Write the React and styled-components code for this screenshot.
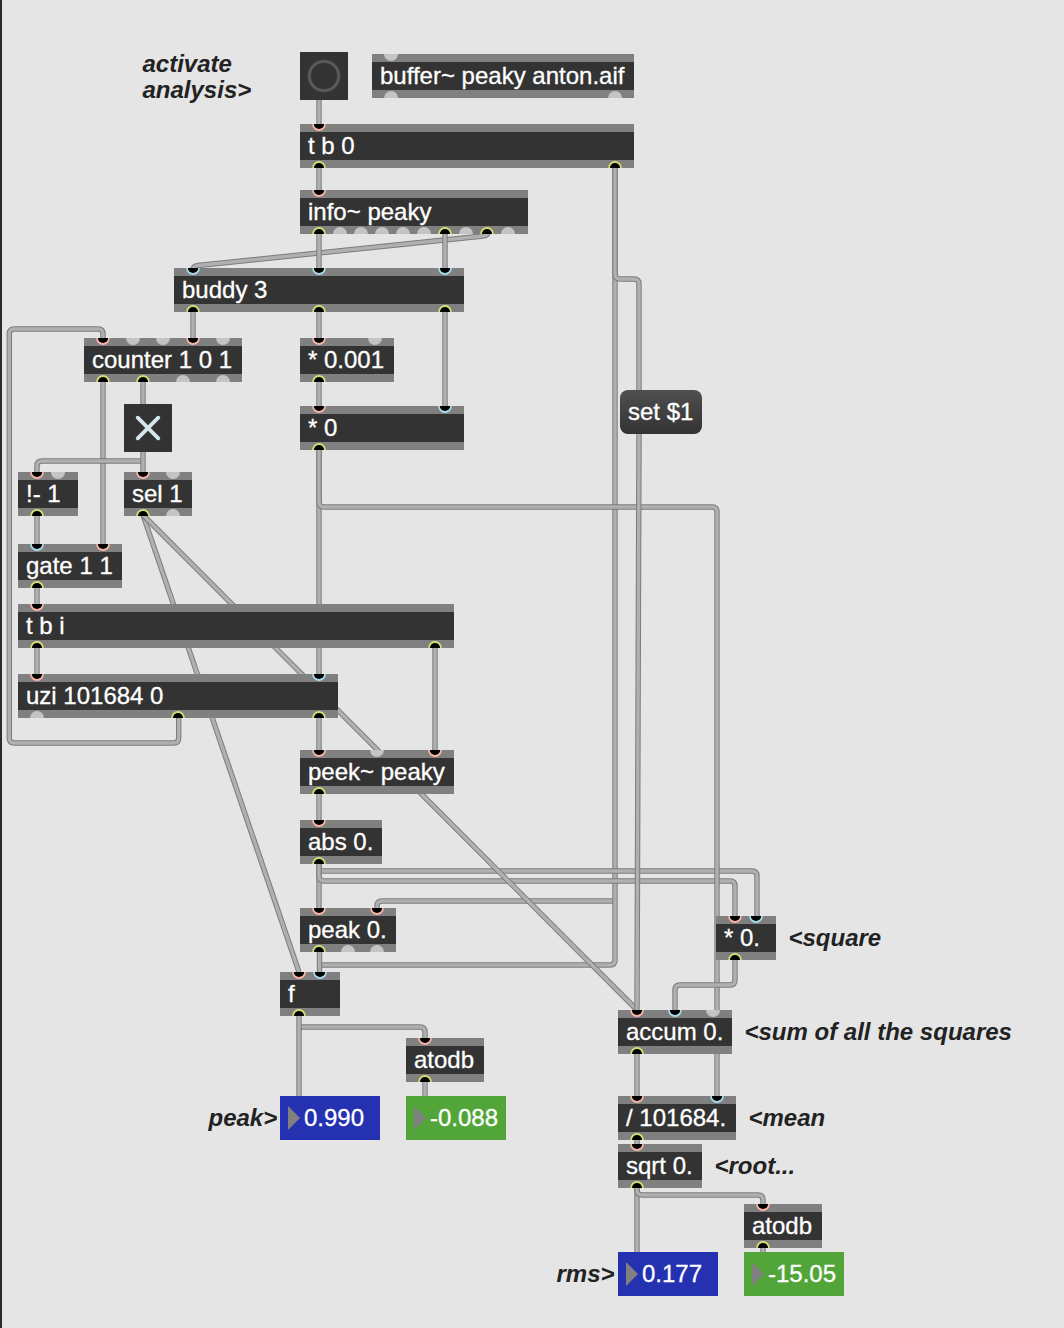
import React from 'react';
import styled, { createGlobalStyle } from 'styled-components';

const GlobalStyle = createGlobalStyle`
  body {
    margin: 0;
    background: #e5e5e5;
    overflow: hidden;
  }
`;

const Window = styled.div`
  display: flex;
  width: 1064px;
  height: 1328px;
`;

const WindowEdge = styled.div`
  flex: 0 0 2px;
  background: #2b2b2d;
`;

// the canvas keeps window coordinates, so it starts under the 2px edge
const Patcher = styled.main`
  position: relative;
  flex: 1;
  margin-left: -2px;
  overflow: hidden;
  font-family: 'Liberation Sans', Arial, sans-serif;
  font-size: 24px;
  line-height: 28px;
  color: #fff;
  white-space: pre;
  -webkit-text-stroke: 0.3px currentColor;
`;

const Cords = styled.svg`
  display: block;
  fill: none;
`;

const Item = styled.div`
  position: absolute;
  box-sizing: border-box;
  left: ${(props) => props.$x}px;
  top: ${(props) => props.$y}px;
`;

const ObjectBox = styled(Item)`
  display: flex;
  flex-direction: column;
  width: ${(props) => props.$w}px;
  height: 44px;
  background: #333;
`;

const Bar = styled.svg`
  display: block;
  width: 100%;
  height: 8px;
  background: #808080;
`;

const ObjectText = styled.div`
  height: 28px;
  padding-left: 8px;
`;

const Square = styled(Item)`
  display: flex;
  width: 48px;
  height: 48px;
  background: #333;
`;

const Message = styled(Item)`
  display: flex;
  width: 82px;
  height: 44px;
  padding: 8px;
  border-radius: 8px;
  background: linear-gradient(#4f4f4f, #333);
`;

const NumberBox = styled(Item)`
  display: flex;
  align-items: center;
  gap: 4px;
  width: 100px;
  height: 44px;
  padding-left: 8px;
  background: ${(props) => props.$color};
`;

const Comment = styled(Item)`
  color: #222;
  font-weight: bold;
  font-style: italic;
  line-height: 26px;
  -webkit-text-stroke: 0;
`;

const BLUE = '#2431b1';
const GREEN = '#52a639';

const RING = {
  hot: '#f5b5a5',
  cold: '#a5dbe8',
  out: '#d5dc72',
};

// ports are [kind, x inside the box], an empty kind is a port with no cord
const objects = [
  { text: 'buffer~ peaky anton.aif', x: 372, y: 54, w: 262, ins: [['', 19]], outs: [['', 19], ['', 243]] },
  { text: 't b 0', x: 300, y: 124, w: 334, ins: [['hot', 19]], outs: [['out', 19], ['out', 315]] },
  {
    text: 'info~ peaky', x: 300, y: 190, w: 228,
    ins: [['hot', 19]],
    outs: [['out', 19], ['', 40], ['', 61], ['', 82], ['', 103], ['', 124], ['out', 145], ['', 166], ['out', 187], ['', 208]],
  },
  {
    text: 'buddy 3', x: 174, y: 268, w: 290,
    ins: [['cold', 19], ['cold', 145], ['cold', 271]],
    outs: [['out', 19], ['out', 145], ['out', 271]],
  },
  {
    text: 'counter 1 0 1', x: 84, y: 338, w: 158,
    ins: [['hot', 19], ['', 49], ['', 79], ['hot', 109], ['', 139]],
    outs: [['out', 19], ['out', 59], ['', 99], ['', 139]],
  },
  { text: '* 0.001', x: 300, y: 338, w: 94, ins: [['hot', 19], ['', 75]], outs: [['out', 19]] },
  { text: '* 0', x: 300, y: 406, w: 164, ins: [['hot', 19], ['cold', 145]], outs: [['out', 19]] },
  { text: '!- 1', x: 18, y: 472, w: 60, ins: [['hot', 19], ['', 40]], outs: [['out', 19]] },
  { text: 'sel 1', x: 124, y: 472, w: 68, ins: [['hot', 19], ['', 49]], outs: [['out', 19], ['', 49]] },
  { text: 'gate 1 1', x: 18, y: 544, w: 104, ins: [['cold', 19], ['hot', 85]], outs: [['out', 19]] },
  { text: 't b i', x: 18, y: 604, w: 436, ins: [['hot', 19]], outs: [['out', 19], ['out', 417]] },
  {
    text: 'uzi 101684 0', x: 18, y: 674, w: 320,
    ins: [['hot', 19], ['cold', 301]],
    outs: [['', 19], ['out', 160], ['out', 301]],
  },
  { text: 'peek~ peaky', x: 300, y: 750, w: 154, ins: [['hot', 19], ['', 77], ['hot', 135]], outs: [['out', 19]] },
  { text: 'abs 0.', x: 300, y: 820, w: 82, ins: [['hot', 19]], outs: [['out', 19]] },
  { text: 'peak 0.', x: 300, y: 908, w: 96, ins: [['hot', 19], ['hot', 77]], outs: [['out', 19], ['', 48], ['', 77]] },
  { text: 'f', x: 280, y: 972, w: 60, ins: [['hot', 19], ['cold', 40]], outs: [['out', 19]] },
  { text: 'atodb', x: 406, y: 1038, w: 78, ins: [['hot', 19]], outs: [['out', 19]] },
  { text: '* 0.', x: 716, y: 916, w: 60, ins: [['hot', 19], ['cold', 40]], outs: [['out', 19]] },
  { text: 'accum 0.', x: 618, y: 1010, w: 114, ins: [['hot', 19], ['cold', 57], ['', 95]], outs: [['out', 19]] },
  { text: '/ 101684.', x: 618, y: 1096, w: 118, ins: [['hot', 19], ['cold', 99]], outs: [['out', 19]] },
  { text: 'sqrt 0.', x: 618, y: 1144, w: 84, ins: [['hot', 19]], outs: [['out', 19]] },
  { text: 'atodb', x: 744, y: 1204, w: 78, ins: [['hot', 19]], outs: [['out', 19]] },
];

const comments = [
  { text: 'activate\nanalysis>', x: 142.5, y: 51 },
  { text: '<square', x: 788.5, y: 925 },
  { text: '<sum of all the squares', x: 744.5, y: 1019 },
  { text: '<mean', x: 748.5, y: 1105 },
  { text: '<root...', x: 714.5, y: 1153 },
  { text: 'peak>', x: 208.5, y: 1105 },
  { text: 'rms>', x: 556.5, y: 1261 },
];

const numbers = [
  { text: '0.990', x: 280, y: 1096, color: BLUE },
  { text: '-0.088', x: 406, y: 1096, color: GREEN },
  { text: '0.177', x: 618, y: 1252, color: BLUE },
  { text: '-15.05', x: 744, y: 1252, color: GREEN },
];

// later cords are drawn over earlier ones
const cords = [
  [[319, 100], [319, 124]],
  [[319, 168], [319, 190]],
  [[488, 232], [488, 235.5], [193, 266], [193, 270]],
  [[319, 234], [319, 268]],
  [[445, 234], [445, 268]],
  [[193, 312], [193, 338]],
  [[319, 312], [319, 338]],
  [[445, 312], [445, 406]],
  [[319, 382], [319, 406]],
  [[143, 382], [143, 404]],
  [[103, 382], [103, 544]],
  [[143, 461], [37, 461], [37, 472]],
  [[143, 452], [143, 472]],
  [[37, 516], [37, 544]],
  [[37, 588], [37, 604]],
  [[37, 648], [37, 674]],
  [[435, 648], [435, 750]],
  [[178.7, 718], [178.7, 743], [9.3, 743], [9.3, 329], [103, 329], [103, 338]],
  [[319, 718], [319, 750]],
  [[319, 794], [319, 820]],
  [[615, 901], [377, 901], [377, 908]],
  [[615, 168], [615, 965], [319.5, 965]],
  [[319.5, 952], [319.5, 972]],
  [[319, 871], [757, 871], [757, 916]],
  [[319, 864], [319, 908]],
  [[319, 864], [319, 881], [735, 881], [735, 916]],
  [[319, 450], [319, 674]],
  [[319, 450], [319, 507], [717, 507], [717, 1096]],
  [[735, 960], [735, 985], [675, 985], [675, 1010]],
  [[143, 515], [299, 972]],
  [[143, 515], [637, 1010]],
  [[615, 168], [615, 279], [639, 279], [639, 390]],
  [[639, 434], [637, 1010]],
  [[299, 1027], [425, 1027], [425, 1038]],
  [[299, 1016], [299, 1096]],
  [[425, 1082], [425, 1096]],
  [[637, 1054], [637, 1096]],
  [[637, 1140], [637, 1144]],
  [[637, 1188], [637, 1252]],
  [[637, 1188], [637, 1195], [763, 1195], [763, 1204]],
  [[763, 1248], [763, 1252]],
];

const CORNER = 5;

const moveToward = (from, to) => {
  const length = Math.hypot(to[0] - from[0], to[1] - from[1]);
  const t = Math.min(CORNER, length) / length;
  return [from[0] + (to[0] - from[0]) * t, from[1] + (to[1] - from[1]) * t];
};

const cordPath = (points) =>
  points
    .map((point, i) => {
      if (i === 0) return `M${point}`;
      if (i === points.length - 1) return `L${point}`;
      return `L${moveToward(point, points[i - 1])} Q${point} ${moveToward(point, points[i + 1])}`;
    })
    .join(' ');

const Cord = ({ points }) => {
  const d = cordPath(points);
  return (
    <g>
      <path d={d} stroke="#7c7c7c" strokeWidth="5.4" />
      <path d={d} stroke="#b0b0b0" strokeWidth="3.4" />
    </g>
  );
};

const PortBar = ({ ports, bottom }) => (
  <Bar>
    {ports.map(([kind, x]) =>
      kind ? (
        <g key={x}>
          <circle cx={x} cy={bottom ? 8 : 0} r="6.9" fill={RING[kind]} />
          <circle cx={x} cy={bottom ? 8 : 0} r="5.1" fill="#000" />
        </g>
      ) : (
        <circle key={x} cx={x} cy={bottom ? 8 : 0} r="7" fill="#c3c4c6" />
      )
    )}
  </Bar>
);

const MaxObject = ({ text, x, y, w, ins, outs }) => (
  <ObjectBox $x={x} $y={y} $w={w}>
    <PortBar ports={ins} />
    <ObjectText>{text}</ObjectText>
    <PortBar ports={outs} bottom />
  </ObjectBox>
);

const App = () => (
  <>
    <GlobalStyle />
    <Window>
      <WindowEdge />
      <Patcher>
        <Cords width="1064" height="1328">
          {cords.map((points, i) => (
            <Cord key={i} points={points} />
          ))}
        </Cords>

        {objects.map((object) => (
          <MaxObject key={`${object.x}-${object.y}`} {...object} />
        ))}

        <Square $x={300} $y={52}>
          <svg width="48" height="48">
            <circle cx="24" cy="24" r="14.7" fill="none" stroke="#585858" strokeWidth="3.3" />
          </svg>
        </Square>
        <Square $x={124} $y={404}>
          <svg width="48" height="48">
            <path d="M13.7 13.7L34.3 34.3M34.3 13.7L13.7 34.3" stroke="#d5e7eb" strokeWidth="3.8" strokeLinecap="round" />
          </svg>
        </Square>
        <Message $x={620} $y={390}>set $1</Message>

        {numbers.map(({ text, x, y, color }) => (
          <NumberBox key={`${x}-${y}`} $x={x} $y={y} $color={color}>
            <svg width="12" height="24">
              <path d="M0 0L12 12L0 24Z" fill="#808080" />
            </svg>
            <span>{text}</span>
          </NumberBox>
        ))}

        {comments.map(({ text, x, y }) => (
          <Comment key={text} $x={x} $y={y}>{text}</Comment>
        ))}
      </Patcher>
    </Window>
  </>
);

export default App;
